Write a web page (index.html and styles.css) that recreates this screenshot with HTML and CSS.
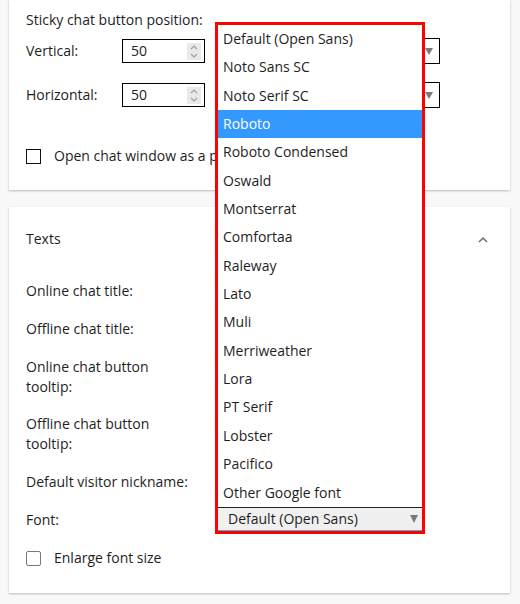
FILE: index.html
```html
<!DOCTYPE html>
<html lang="en">
<head>
<meta charset="utf-8">
<title>Chat settings</title>
<link rel="stylesheet" href="styles.css">
</head>
<body>
<div class="page">
  <section class="card card-position">
    <div class="title">Sticky chat button position:</div>
    <div class="pos-row first">
      <span class="pos-label">Vertical:</span>
      <div class="num">
        <span>50</span>
        <span class="spin"><svg width="14" height="17" viewBox="0 0 14 17"><polyline points="4,6 7,3 10,6" fill="none" stroke="#a0a0a0" stroke-width="1.2"/><polyline points="4,11 7,14 10,11" fill="none" stroke="#a0a0a0" stroke-width="1.2"/></svg></span>
      </div>
      <div class="sel"><span class="tri"></span></div>
    </div>
    <div class="pos-row second">
      <span class="pos-label">Horizontal:</span>
      <div class="num">
        <span>50</span>
        <span class="spin"><svg width="14" height="17" viewBox="0 0 14 17"><polyline points="4,6 7,3 10,6" fill="none" stroke="#a0a0a0" stroke-width="1.2"/><polyline points="4,11 7,14 10,11" fill="none" stroke="#a0a0a0" stroke-width="1.2"/></svg></span>
      </div>
      <div class="sel"><span class="tri"></span></div>
    </div>
    <div class="check-row popup-row">
      <span class="box box-dark"></span>
      <span>Open chat window as a popup</span>
    </div>
  </section>

  <section class="card card-texts">
    <div class="card-head">
      <span>Texts</span>
      <svg class="chev" width="10" height="7" viewBox="0 0 10 7"><polyline points="1,6 5,2 9,6" fill="none" stroke="#6b6b6b" stroke-width="1.5"/></svg>
    </div>
    <div class="fields">
      <div class="field">Online chat title:</div>
      <div class="field">Offline chat title:</div>
      <div class="field tight">Online chat button tooltip:</div>
      <div class="field">Offline chat button tooltip:</div>
      <div class="field">Default visitor nickname:</div>
      <div class="field">Font:</div>
    </div>
    <div class="check-row enlarge-row">
      <span class="box box-light"></span>
      <span>Enlarge font size</span>
    </div>
  </section>
</div>

<div class="popup">
  <ul class="options">
    <li>Default (Open Sans)</li>
    <li>Noto Sans SC</li>
    <li>Noto Serif SC</li>
    <li class="active">Roboto</li>
    <li>Roboto Condensed</li>
    <li>Oswald</li>
    <li>Montserrat</li>
    <li>Comfortaa</li>
    <li>Raleway</li>
    <li>Lato</li>
    <li>Muli</li>
    <li>Merriweather</li>
    <li>Lora</li>
    <li>PT Serif</li>
    <li>Lobster</li>
    <li>Pacifico</li>
    <li>Other Google font</li>
  </ul>
  <div class="font-select">
    <span>Default (Open Sans)</span>
    <span class="tri tri-big"></span>
  </div>
</div>
</body>
</html>
```

FILE: styles.css
```css
html, body {
  margin: 0;
  padding: 0;
}

body {
  position: relative;
  background: #f8f8f8;
  font-family: "Open Sans", "Noto Sans", sans-serif;
  font-size: 14px;
  line-height: 20px;
  color: #1e1e1e;
  width: 520px;
  height: 604px;
  overflow: hidden;
}

.page {
  padding: 0 10px 0 9px;
}

.card {
  background: #fff;
  box-shadow: 0 1px 2px rgba(0, 0, 0, 0.25);
}

.card + .card {
  margin-top: 17px;
}

/* ---------- card 1 ---------- */
.card-position {
  padding: 10px 0 24px 17px;
}

.title {
  line-height: 20px;
}

.pos-row {
  display: flex;
  align-items: center;
  height: 26px;
}

.pos-row.first {
  margin-top: 8px;
}

.pos-row.second {
  margin-top: 18px;
}

.pos-label {
  width: 96px;
}

.num {
  box-sizing: border-box;
  width: 83px;
  height: 24px;
  border: 1px solid #000;
  padding: 0 3px 0 8px;
  display: flex;
  align-items: center;
  justify-content: space-between;
}

.spin {
  display: flex;
  width: 14px;
  height: 17px;
  background: #e9e9e9;
}

.sel {
  box-sizing: border-box;
  margin-left: 15px;
  width: 220px;
  height: 26px;
  border: 1px solid #000;
  display: flex;
  align-items: center;
  justify-content: flex-end;
  padding-right: 6px;
}

.tri {
  width: 0;
  height: 0;
  border-left: 4.5px solid transparent;
  border-right: 4.5px solid transparent;
  border-top: 7px solid #7a7a7a;
}

.tri-big {
  border-top-width: 8px;
}

.check-row {
  display: flex;
  align-items: center;
  line-height: 20px;
}

.popup-row {
  margin-top: 38px;
  white-space: nowrap;
}

.box {
  box-sizing: border-box;
  width: 15px;
  height: 15px;
  margin-right: 13px;
  flex: none;
}

.box-dark {
  border: 1.5px solid #111;
}

.box-light {
  border: 1.5px solid #777;
  border-radius: 2px;
}

/* ---------- card 2 ---------- */
.card-texts {
  padding: 22px 22px 25px 17px;
}

.card-head {
  display: flex;
  align-items: center;
  justify-content: space-between;
  line-height: 20px;
}

.chev {
  display: block;
}

.fields {
  margin-top: 32px;
  display: flex;
  flex-direction: column;
  gap: 18px;
}

.field {
  width: 170px;
  line-height: 20px;
}

.field.tight {
  margin-bottom: -1px;
}

.enlarge-row {
  margin-top: 18px;
}

/* ---------- dropdown popup ---------- */
.popup {
  position: absolute;
  left: 215px;
  top: 22px;
  width: 204px;
  border: 3px solid #ff0000;
  background: #fff;
  z-index: 5;
}

.options {
  list-style: none;
  margin: 0;
  padding: 0;
}

.options li {
  height: 28.35px;
  line-height: 28.35px;
  padding-left: 5px;
  white-space: nowrap;
}

.options li.active {
  background: #3399ff;
  color: #fff;
}

.font-select {
  height: 22px;
  border-top: 1px solid #222;
  border-bottom: 1px solid #5aa5e6;
  background: #f0f0f0;
  display: flex;
  align-items: center;
  justify-content: space-between;
  padding: 0 4px 0 10px;
}
```
